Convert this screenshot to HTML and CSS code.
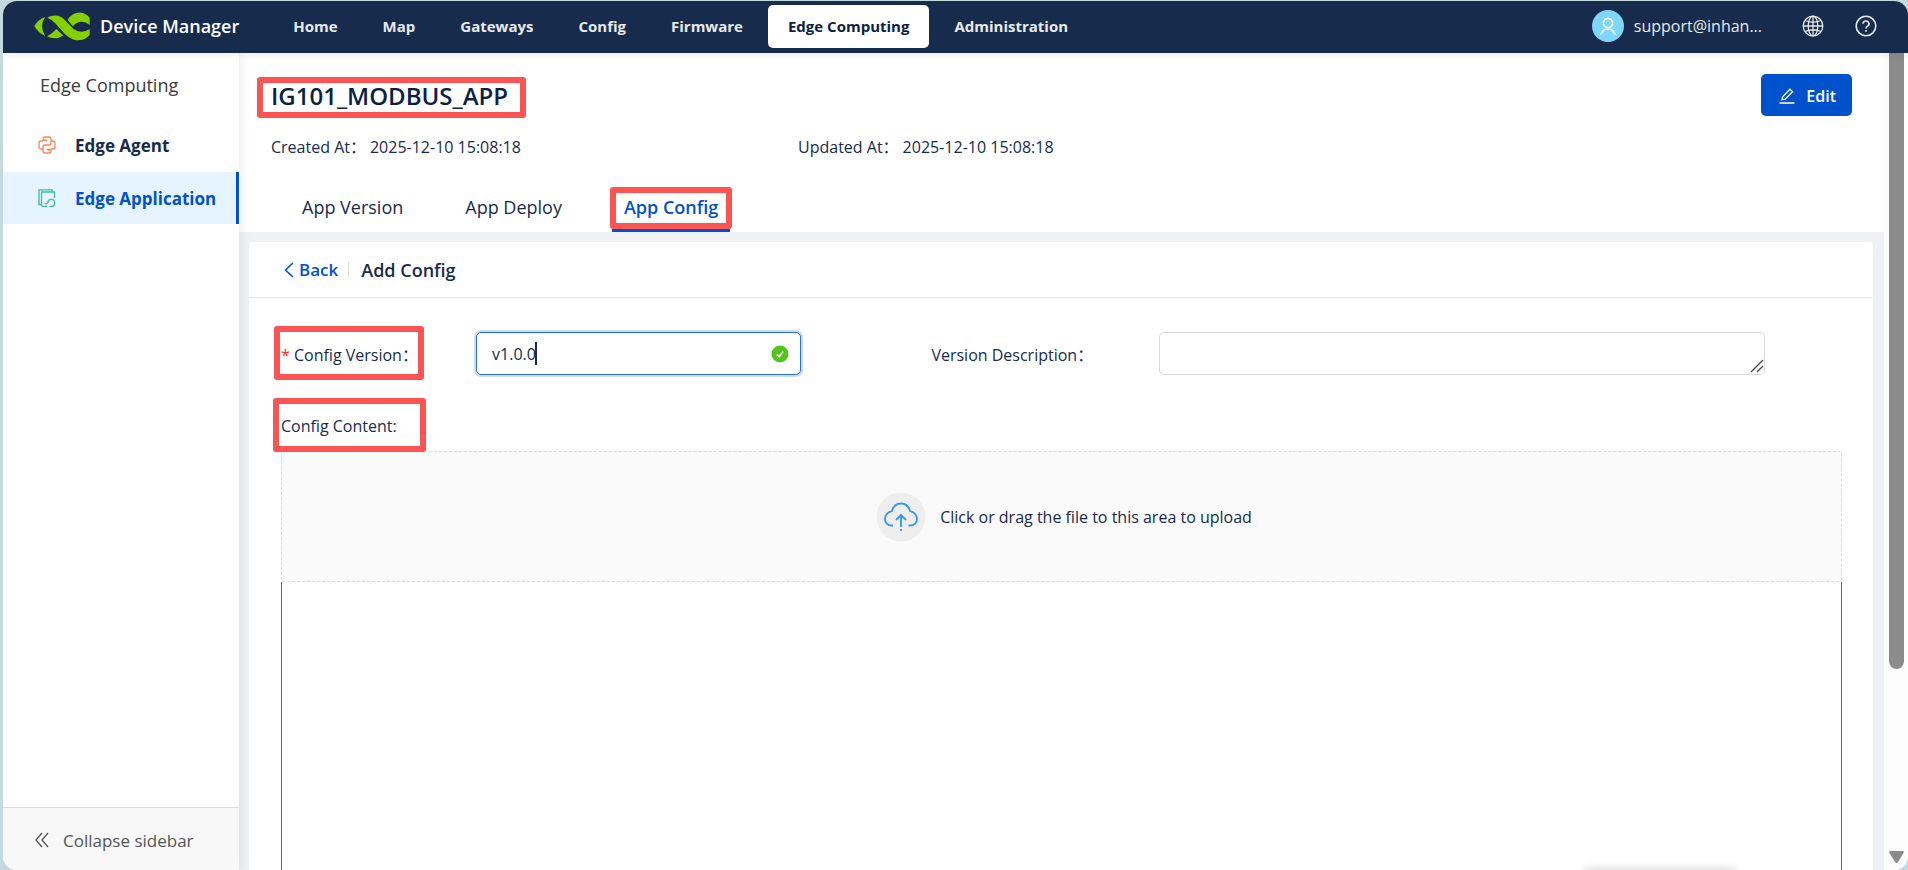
FILE: index.html
```html
<!DOCTYPE html>
<html lang="en">

<head>
    <meta charset="UTF-8">
    <title>Device Manager</title>
    <link rel="stylesheet" href="styles.css">
</head>

<body>
    <div class="app">

        <header class="topbar">
            <a class="brand" href="#">
                <svg class="logo" viewBox="18 19 170 87" aria-hidden="true">
                    <g fill="#84d000">
                        <path d="M52 34Q30 42 19 61Q30 82 52 91Q33 62 52 34Z" />
                        <path d="M58 36Q72 26 92 30Q104 33 116 47L138 70Q160 86 187 71V88Q172 106 146 104Q128 102 110 84L84 54Q74 42 58 36Z" />
                        <path d="M57 92Q68 88 86 70L107 90Q82 106 57 92Z" />
                        <path d="M120 42Q134 20 158 20Q176 22 187 36V58Q168 42 148 52Q140 56 136 62Z" />
                    </g>
                </svg>
                <span>Device Manager</span>
            </a>
            <nav class="menu">
                <a href="#">Home</a>
                <a href="#">Map</a>
                <a href="#">Gateways</a>
                <a href="#">Config</a>
                <a href="#">Firmware</a>
                <a href="#" class="valgt">Edge Computing</a>
                <a href="#">Administration</a>
            </nav>
            <div class="tools">
                <button class="user">
                    <svg class="avatar" viewBox="0 0 32 32" aria-hidden="true">
                        <circle cx="16" cy="16" r="16" fill="#7fd6fb" />
                        <g fill="none" stroke="#fff" stroke-width="1.6">
                            <circle cx="16" cy="13" r="4.6" />
                            <path d="M9 24.500a7.200 7.200 0 0 1 14 0" />
                        </g>
                    </svg>
                    <span>support@inhan...</span>
                </button>
                <button class="icon" aria-label="Language">
                    <svg viewBox="0 0 22 22" fill="none" stroke="#e4e7eb" stroke-width="1.3">
                        <circle cx="11" cy="11" r="9.800" />
                        <ellipse cx="11" cy="11" rx="4.800" ry="9.800" />
                        <path d="M11 1v20M1 11h20M3 5.500q8 3.500 16 0M3 16.500q8-3.500 16 0" />
                    </svg>
                </button>
                <button class="icon" aria-label="Help">
                    <svg viewBox="0 0 22 22" fill="none" stroke="#e4e7eb" stroke-width="1.600">
                        <circle cx="11" cy="11" r="9.800" />
                        <path d="M8 8.800a3 2.800 0 1 1 4.500 2.400q-1.500.8-1.500 2.300" />
                        <path d="M11 15v1.800" />
                    </svg>
                </button>
            </div>
        </header>

        <aside class="sidebar">
            <h2>Edge Computing</h2>
            <nav>
                <a href="#">
                    <svg viewBox="0 0 18 18" fill="none" stroke="#f58a5c" stroke-width="1.300">
                        <path d="M9.500 4.500H5V3q0-2 2-2h4q2 0 2 2v4q0 2-2 2H7q-2 0-2 2v2H3q-2 0-2-2V7q0-2 2-2h2" />
                        <path d="M8.500 13.500H13V15q0 2-2 2H7q-2 0-2-2v-2M13 5h2q2 0 2 2v4q0 2-2 2h-2M7 2.800v1M11 14.200v1" />
                    </svg>
                    Edge Agent
                </a>
                <a href="#" class="valgt">
                    <svg viewBox="0 0 18 18" fill="none" stroke="#3dbf9c" stroke-width="1.300">
                        <path d="M3.500 15.500H1V.8h13v2" />
                        <path d="M9 17.500H5q-1.500 0-1.500-1.500V3H16.500v6" />
                        <path d="M6.500 14.200q2 1.500 3.300-.7M9.800 14q0-3.700 3.600-3.700 3.300 0 3.300 3.600T13 17.400h-1.500" />
                    </svg>
                    Edge Application
                </a>
            </nav>
            <button class="collapse">
                <svg viewBox="0 0 14 16" fill="none" stroke="#555" stroke-width="1.300">
                    <path d="M7 1 1 8l6 7M13 1 7 8l6 7" />
                </svg>
                Collapse sidebar
            </button>
        </aside>

        <main>
            <section class="top">
                <div class="titleRow">
                    <h1 class="marked markTitle">IG101_MODBUS_APP</h1>
                    <button class="edit">
                        <svg viewBox="0 0 16 16" fill="none" stroke="#fff" stroke-width="1.300">
                            <path d="M.5 15h15M3 11.800l.6-3L11 1.200l2.600 2.500-7.500 7.500z" />
                        </svg>
                        Edit
                    </button>
                </div>
                <div class="meta">
                    <p>Created At：<time>2025-12-10 15:08:18</time></p>
                    <p>Updated At：<time>2025-12-10 15:08:18</time></p>
                </div>
                <nav class="tabs">
                    <a href="#">App Version</a>
                    <a href="#">App Deploy</a>
                    <a href="#" class="valgt marked markTab">App Config</a>
                </nav>
            </section>

            <section class="card">
                <div class="cardHead">
                    <a href="#" class="back">
                        <svg viewBox="0 0 10 16" fill="none" stroke="#0052cc" stroke-width="1.600">
                            <path d="M9 1 1.500 8 9 15" />
                        </svg>
                        Back
                    </a>
                    <h3>Add Config</h3>
                </div>

                <form class="config">
                    <div class="fields">
                        <div class="field">
                            <label for="version" class="marked markVersion"><i>*</i> Config Version：</label>
                            <div class="inputWrap">
                                <input id="version" type="text" value="v1.0.0">
                                <span class="caret"></span>
                                <svg class="ok" viewBox="0 0 18 18" aria-hidden="true">
                                    <circle cx="9" cy="9" r="8.500" fill="#52c41a" />
                                    <path d="M5.800 9.200 8.200 11.800 12.200 6.500" fill="none" stroke="#fff" stroke-width="1.500" />
                                </svg>
                            </div>
                        </div>
                        <div class="field">
                            <label for="description">Version Description：</label>
                            <div class="inputWrap">
                                <textarea id="description" rows="1"></textarea>
                                <svg class="grip" viewBox="0 0 14 14" fill="none" stroke="#444" stroke-width="1.300" aria-hidden="true">
                                    <path d="M1 13 13 1M7 13l6-6" />
                                </svg>
                            </div>
                        </div>
                    </div>

                    <p class="contentLabel"><span class="marked markContent">Config Content:</span></p>

                    <button type="button" class="upload">
                        <svg viewBox="0 0 50 50" aria-hidden="true">
                            <circle cx="25" cy="25" r="24.500" fill="#eee" />
                            <g fill="none" stroke="#3296fa" stroke-width="1.800">
                                <path d="M17 33.500C11 34 9 30 9 27q0-6 7-8 2-7.500 9-7.500t9 7.500q7 2 7 8c0 3-2 7-8.500 6.500" />
                                <path d="M25 23v12M20 28l5-5 5 5M25 37v2" />
                            </g>
                        </svg>
                        Click or drag the file to this area to upload
                    </button>
                    <div class="editor"></div>
                </form>
            </section>
            <div class="toast"></div>
        </main>

        <div class="scrollbar">
            <div class="thumb"></div>
            <svg viewBox="0 0 15 12"><path fill="#8b8b8b" d="M1.500 0h12q2 0 1 2L9 11q-1.500 2-3 0L.5 2q-1-2 1-2z" /></svg>
        </div>
    </div>
</body>

</html>
```
FILE: styles.css
```css
*, *::after {
    box-sizing: border-box;
}

body {
    margin: 0;
    background-color: #c3dadf;
    font-family: 'Open Sans', 'Noto Sans CJK SC', sans-serif;
    font-size: 16px;
    color: #172b4d;
}

h1, h2, h3, p {
    margin: 0;
}

a {
    text-decoration: none;
    color: inherit;
}

button {
    font: inherit;
    color: inherit;
    border: none;
    background: none;
    padding: 0;
    cursor: pointer;
}

svg {
    flex: none;
}

.app {
    display: grid;
    grid-template-columns: 236px 1fr 24px;
    grid-template-rows: 52px 1fr;
    height: calc(100vh - 1px);
    margin: 1px 0 0 3px;
    border-radius: 14px;
    overflow: hidden;
    background-color: white;
}

/* top bar */

.topbar {
    grid-column: 1 / -1;
    display: flex;
    align-items: center;
    background-color: #172b4d;
    color: #e8eaed;
    padding: 0 31px 2px;
    box-shadow: 0 2px 8px rgba(0, 0, 0, 0.08);
    z-index: 2;
}

.brand {
    display: flex;
    align-items: center;
    gap: 10px;
    font-size: 18px;
    font-weight: 600;
    color: white;
}

.logo {
    width: 56px;
    height: 29px;
}

.menu {
    display: flex;
    margin-left: 34px;
    gap: 5px;
    font-size: 15px;
    font-weight: 700;
}

.menu a {
    padding: 0 20px;
    line-height: 43px;
    border-radius: 5px;
}

.menu .valgt {
    background-color: white;
    color: #0b1f45;
}

.tools {
    display: flex;
    align-items: center;
    margin-left: auto;
}

.user {
    display: flex;
    align-items: center;
    gap: 10px;
    margin-right: 40px;
}

.avatar {
    width: 32px;
    height: 32px;
}

.icon + .icon {
    margin-left: 31px;
}

.icon, .icon svg {
    display: block;
    width: 22px;
    height: 22px;
}

/* sidebar */

.sidebar {
    display: flex;
    flex-direction: column;
    box-shadow: 2px 0 10px rgba(0, 0, 0, 0.08);
    z-index: 1;
}

.sidebar h2 {
    padding: 20px 37px 22px;
    font-size: 18px;
    font-weight: 400;
    line-height: 24px;
    color: #3b3b3b;
}

.sidebar nav a {
    display: flex;
    align-items: center;
    gap: 19px;
    height: 52px;
    margin-bottom: 1px;
    padding-left: 35px;
    font-size: 17px;
    font-weight: 700;
}

.sidebar nav svg {
    width: 18px;
    height: 18px;
}

.sidebar nav .valgt {
    background-color: #e6f4ff;
    border-right: 3px solid #0052cc;
    color: #0052cc;
}

.collapse {
    display: flex;
    align-items: center;
    gap: 14px;
    height: 63px;
    margin-top: auto;
    padding: 2px 0 0 32px;
    border-top: 1px solid #dedede;
    background-color: #f8f8f8;
    font-size: 17px;
    color: #555;
}

.collapse svg {
    width: 14px;
    height: 16px;
}

/* app header */

main {
    display: flex;
    flex-direction: column;
    min-height: 0;
    background-color: #f0f1f5;
}

.top {
    padding: 21px 32px 0;
    background-color: white;
}

.titleRow {
    display: flex;
    align-items: center;
    justify-content: space-between;
}

h1 {
    font-size: 24px;
    font-weight: 600;
    color: #0b1f45;
}

.edit {
    display: flex;
    align-items: center;
    gap: 11px;
    height: 42px;
    padding: 1px 16px 0 18px;
    border-radius: 5px;
    background-color: #0052cc;
    color: white;
    font-weight: 600;
}

.edit svg {
    width: 16px;
    height: 16px;
}

.meta {
    display: grid;
    grid-template-columns: repeat(3, 1fr);
    margin-top: 19px;
    line-height: 24px;
}

.meta time {
    margin-left: 4px;
}

.tabs {
    display: flex;
    gap: 38px;
    margin-top: 27px;
    padding-left: 19px;
    font-size: 18px;
}

.tabs a {
    padding: 0 12px;
    line-height: 43px;
    border-bottom: 3px solid transparent;
}

.tabs .valgt {
    border-color: #0052cc;
    color: #0052cc;
    font-weight: 600;
}

/* card with the config form */

.card {
    flex: 1;
    display: flex;
    flex-direction: column;
    margin: 10px 11px 0 10px;
    border-radius: 3px 3px 0 0;
    background-color: white;
}

.cardHead {
    display: flex;
    align-items: center;
    height: 56px;
    padding-left: 35px;
    border-bottom: 1px solid #e6e6e6;
    font-size: 17px;
    font-weight: 600;
}

.back {
    display: flex;
    align-items: center;
    gap: 5px;
    color: #0052cc;
}

.back svg {
    width: 10px;
    height: 16px;
}

h3 {
    margin-left: 10px;
    padding-left: 12px;
    border-left: 1px solid #e0e0e0;
    font-size: 18px;
    font-weight: 600;
    line-height: 16px;
}

.config {
    flex: 1;
    display: flex;
    flex-direction: column;
    padding: 34px 31px 0 32px;
}

.fields {
    display: grid;
    grid-template-columns: 10fr 14fr;
}

.field {
    display: grid;
    grid-template-columns: 30% 50%;
    align-items: center;
}

.field + .field {
    grid-template-columns: 25% 66.6%;
}

label i {
    font-style: normal;
    color: #ff2a3a;
}

.inputWrap {
    position: relative;
    display: flex;
}

input, textarea {
    width: 100%;
    height: 43px;
    padding: 0 15px;
    border: 1px solid #d9d9d9;
    border-radius: 5px;
    font: inherit;
    color: inherit;
    outline: none;
}

input {
    border-color: #2570d6;
    box-shadow: 0 0 0 2px #ccdcf5;
}

.caret {
    position: absolute;
    top: 10px;
    left: 59px;
    width: 2px;
    height: 23px;
    background-color: #172b4d;
}

.ok {
    position: absolute;
    top: 13px;
    right: 12px;
    width: 18px;
    height: 18px;
}

textarea {
    resize: none;
}

.grip {
    position: absolute;
    right: 1px;
    bottom: 2px;
    width: 14px;
    height: 14px;
}

.contentLabel {
    margin-top: 39px;
    line-height: 24px;
}

.upload {
    display: flex;
    align-items: center;
    justify-content: center;
    gap: 14px;
    height: 131px;
    margin-top: 13px;
    padding-left: 5px;
    border: 1px dashed #d9d9d9;
    border-radius: 3px;
    background-color: #fafafa;
}

.upload svg {
    width: 50px;
    height: 50px;
}

.editor {
    flex: 1;
    border: solid #2570d6;
    border-width: 0 1px;
}

/* red frames around the steps of the guide */

.marked {
    position: relative;
}

.marked::after {
    content: "";
    position: absolute;
    border: 6px solid #fc5353;
    border-radius: 3px;
    pointer-events: none;
}

.markTitle::after {
    inset: -2px -18px -6px -14px;
}

.markTab::after {
    inset: 1px -2px 0;
}

.markVersion::after {
    top: -16px;
    left: -7px;
    width: 150px;
    height: 54px;
}

.markContent::after {
    top: -17px;
    left: -8px;
    width: 153px;
    height: 54px;
}

/* edge of the message that slides in from below */

.toast {
    position: fixed;
    top: 100%;
    right: 173px;
    width: 150px;
    height: 40px;
    box-shadow: 0 0 10px rgba(0, 0, 0, 0.2);
}

.scrollbar {
    display: flex;
    flex-direction: column;
    justify-content: space-between;
    align-items: center;
    padding-bottom: 7px;
    background-color: #fcfcfc;
}

.thumb {
    width: 15px;
    height: 76%;
    border-radius: 0 0 8px 8px;
    background-color: #8b8b8b;
}

.scrollbar svg {
    width: 15px;
    height: 12px;
}
```
